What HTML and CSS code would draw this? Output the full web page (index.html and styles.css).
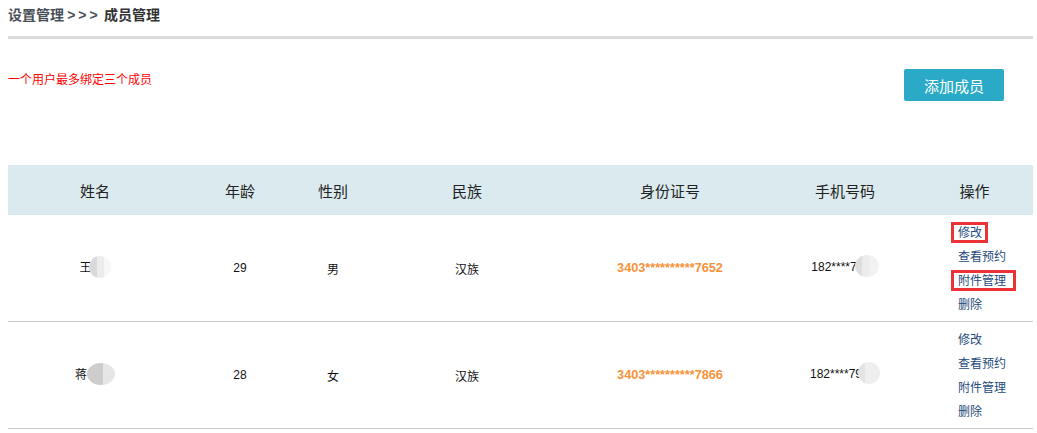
FILE: index.html
```html
<!DOCTYPE html>
<html lang="zh-CN">
<head>
    <meta charset="UTF-8">
    <title>成员管理</title>
    <link rel="stylesheet" href="styles.css">
</head>
<body>
    <div class="page">
        <div class="crumb">设置管理 <span class="crumb-sep">&gt;&gt;&gt;</span> <span class="crumb-current">成员管理</span></div>
        <div class="crumb-bar"></div>

        <div class="toolbar">
            <p class="tip">一个用户最多绑定三个成员</p>
            <button class="add-btn">添加成员</button>
        </div>

        <table class="members">
            <colgroup>
                <col style="width: 174px">
                <col style="width: 116px">
                <col style="width: 70px">
                <col style="width: 198px">
                <col style="width: 208px">
                <col style="width: 142px">
                <col style="width: 117px">
            </colgroup>
            <thead>
                <tr>
                    <th>姓名</th>
                    <th>年龄</th>
                    <th>性别</th>
                    <th>民族</th>
                    <th>身份证号</th>
                    <th>手机号码</th>
                    <th>操作</th>
                </tr>
            </thead>
            <tbody>
                <tr>
                    <td>王<span class="blur blur-name1"></span></td>
                    <td class="num">29</td>
                    <td>男</td>
                    <td>汉族</td>
                    <td class="idno">3403**********7652</td>
                    <td class="num">182****7<span class="blur blur-phone"></span></td>
                    <td class="ops">
                        <a href="#" class="marked">修改</a>
                        <a href="#">查看预约</a>
                        <a href="#" class="marked marked-wide">附件管理</a>
                        <a href="#">删除</a>
                    </td>
                </tr>
                <tr>
                    <td>蒋<span class="blur blur-name2"></span></td>
                    <td class="num">28</td>
                    <td>女</td>
                    <td>汉族</td>
                    <td class="idno">3403**********7866</td>
                    <td class="num">182****79<span class="blur blur-phone2"></span></td>
                    <td class="ops">
                        <a href="#">修改</a>
                        <a href="#">查看预约</a>
                        <a href="#">附件管理</a>
                        <a href="#">删除</a>
                    </td>
                </tr>
            </tbody>
        </table>
    </div>
</body>
</html>
```

FILE: styles.css
```css
body {
    margin: 0;
    font-family: "Noto Sans CJK SC", "Liberation Sans", sans-serif;
    color: #222;
    background-color: #fff;
}

.page {
    width: 1025px;
    padding: 0 8px;
}

.crumb {
    height: 28px;
    line-height: 28px;
    font-size: 14px;
    font-weight: bold;
    color: #4a4f57;
}

.crumb-sep {
    font-family: "Liberation Sans", sans-serif;
    letter-spacing: 3px;
}

.crumb-current {
    color: #333;
}

.crumb-bar {
    margin-top: 8px;
    height: 3px;
    background-color: #dcdcdc;
}

.toolbar {
    display: flex;
    justify-content: space-between;
    align-items: flex-start;
    padding-top: 30px;
}

.tip {
    margin: 2px 0 0;
    font-size: 12px;
    line-height: 16px;
    color: #ff0000;
}

.add-btn {
    width: 100px;
    height: 32px;
    margin-right: 29px;
    border: none;
    border-radius: 2px;
    background-color: #2aaac6;
    color: #fff;
    font-family: inherit;
    font-size: 15px;
    cursor: pointer;
}

.members {
    width: 1025px;
    margin-top: 64px;
    border-collapse: collapse;
    table-layout: fixed;
}

.members th {
    height: 50px;
    padding: 0;
    background-color: #dbeaee;
    font-size: 15px;
    font-weight: normal;
    color: #222;
}

.members td {
    height: 96px;
    padding: 5px 0;
    border-bottom: 1px solid #c6c6c6;
    text-align: center;
    font-size: 12px;
    color: #111;
}

.members td.num {
    font-family: "Liberation Sans", sans-serif;
}

.members td.idno {
    font-family: "Liberation Sans", sans-serif;
    font-size: 12.7px;
    font-weight: bold;
    color: #f7923a;
}

.blur {
    display: inline-block;
    vertical-align: middle;
    height: 22px;
    border-radius: 50%;
    margin-top: -4px;
}

.blur-name1 {
    width: 22px;
    margin-left: -3px;
    background: linear-gradient(90deg, #d9d9d9 0 35%, #ececec 35% 70%, #f7f7f7 70%);
}

.blur-name2 {
    width: 28px;
    background: linear-gradient(90deg, #cdcdcd 0 58%, #e6e6e6 58%);
}

.blur-phone {
    width: 24px;
    margin-left: -2px;
    background: linear-gradient(90deg, #dedede 0 30%, #ececec 30% 60%, #f2f2f2 60%);
}

.blur-phone2 {
    width: 22px;
    margin-left: -4px;
    background: linear-gradient(90deg, #e4e4e4 0 30%, #efefef 30%);
}

.members td.ops {
    text-align: left;
    padding-left: 42px;
}

.ops a {
    display: block;
    width: max-content;
    position: relative;
    line-height: 24px;
    color: #264a7c;
    text-decoration: none;
}

/* red markers drawn over the links in the screenshot */
.ops a.marked::after {
    content: "";
    position: absolute;
    top: 2px;
    bottom: 1px;
    left: -7px;
    right: -6px;
    border: 3px solid #ec3236;
}

.ops a.marked-wide::after {
    right: -10px;
}
```
